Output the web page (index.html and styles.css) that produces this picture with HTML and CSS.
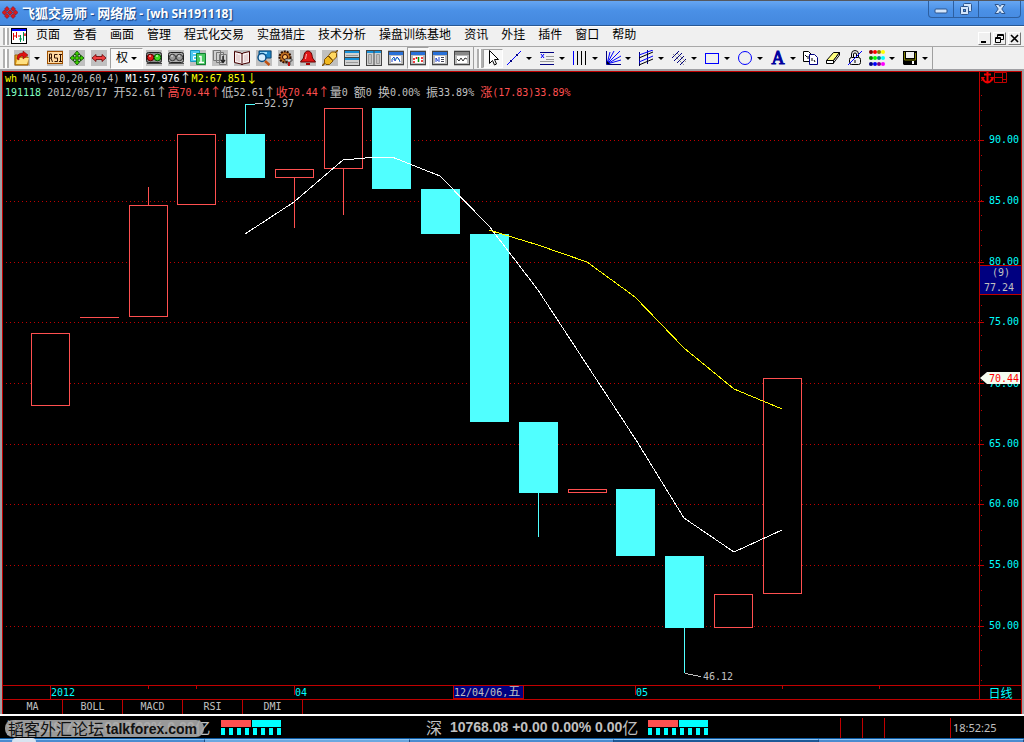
FILE: index.html
```html
<!DOCTYPE html>
<html lang="zh-CN">
<head>
<meta charset="utf-8">
<title>飞狐交易师 - 网络版 - [wh SH191118]</title>
<link rel="stylesheet" href="styles.css">
</head>
<body>
<header class="titlebar">
  <svg class="logo" width="16" height="16" viewBox="0 0 16 16" fill="#e01818" stroke="#7c1020" stroke-width=".6"><path d="M5 1.500l2.500 2.500L5 6.500 2.500 4zM11 1.500L13.500 4 11 6.500 8.500 4zM2.500 5l2.500 2.500L2.500 10 0 7.500zM8 5l2.500 2.500L8 10 5.500 7.500zM13.500 5L16 7.500 13.500 10 11 7.500zM5 8.500L7.500 11 5 13.500 2.500 11zM11 8.500l2.500 2.500-2.500 2.500L8.500 11z"/></svg>
  <h1 class="title"><span class="cn">飞狐交易师</span> - <span class="cn">网络版</span> - [wh SH191118]</h1>
  <div class="winbtns">
    <button class="winbtn" aria-label="最小化"><svg width="14" height="14" viewBox="0 0 14 14"><rect x="1" y="7" width="12" height="4" rx="1" fill="#d4e6fb" stroke="#2d558c"/></svg></button>
    <button class="winbtn" aria-label="还原"><svg width="14" height="14" viewBox="0 0 14 14" fill="#d4e6fb" stroke="#2d558c"><rect x="4.500" y="1.500" width="8" height="8" rx="1"/><rect x="1.500" y="4.500" width="8" height="8" rx="1"/><rect x="4.500" y="7.500" width="2" height="2" fill="#4d91e8"/></svg></button>
    <button class="winbtn wide" aria-label="关闭"><svg width="14" height="14" viewBox="0 0 14 14"><path d="M2 2.500h3.500L7 4.500l1.500-2H12L8.800 7l3.200 4.500H8.500L7 9.500l-1.500 2H2L5.200 7z" fill="#d4e6fb" stroke="#2d558c"/></svg></button>
  </div>
</header>

<nav class="menubar">
  <span class="grip"></span>
  <svg class="docicon" width="16" height="16" viewBox="0 0 16 16"><rect x=".5" y=".5" width="15" height="15" fill="#fff" stroke="#000"/><path d="M1 1h14v2H1z" fill="#00f"/><path d="M2.500 5v7M5.500 4v6M2.500 8h3M14 5v3M12 7h3M7 8h2" stroke="#e00000" fill="none"/><path d="M9.500 7v7M12.500 4v9M8 11h3" stroke="#009050" fill="none"/></svg>
  <a href="#">页面</a><a href="#">查看</a><a href="#">画面</a><a href="#">管理</a><a href="#">程式化交易</a><a href="#">实盘猎庄</a><a href="#">技术分析</a><a href="#">操盘训练基地</a><a href="#">资讯</a><a href="#">外挂</a><a href="#">插件</a><a href="#">窗口</a><a href="#">帮助</a>
  <div class="mdi">
    <button aria-label="最小化窗口"><svg width="9" height="9" viewBox="0 0 9 9"><path d="M1 7h5v2H1z"/></svg></button>
    <button aria-label="还原窗口"><svg width="9" height="9" viewBox="0 0 9 9" fill="none" stroke="#000"><path d="M2.500 3V.5h6v5H6M2 1.500h7M.5 3.500h5v5h-5zM0 4.500h6"/></svg></button>
    <button aria-label="关闭窗口"><svg width="9" height="9" viewBox="0 0 9 9"><path d="M1 1l7 7M8 1L1 8" stroke="#000" stroke-width="1.600"/></svg></button>
  </div>
</nav>

<div class="toolbars">
  <div class="toolbar">
    <span class="grip"></span>
    <button class="tool" aria-label="打开"><svg class="pic" viewBox="0 0 16 16"><path d="M1 5h4l1 2h8v8H1z" fill="#e8a820" stroke="#a06000"/><path d="M2 14l2-6h11l-2 6z" fill="#ffe080"/><path d="M3 9c0-5 3-6 6-6V1l5 4-5 4V6C6 6 5 7 5 10z" fill="#e01010" stroke="#700" stroke-width=".5"/></svg></button>
    <button class="caret" aria-label="打开选项"></button>
    <button class="tool" aria-label="RSI"><svg class="pic" viewBox="0 0 16 16"><rect x=".5" y="1.500" width="15" height="12" fill="#ffd9a0" stroke="#a05000"/><path d="M2.500 12V4h2v4h-2M4 8l1.500 4M10.500 4.500h-3V8h3v3.500h-3M12 4.500h3M13.500 4v8M12 11.500h3" fill="none" stroke="#301000"/></svg></button>
    <button class="tool" aria-label="移动"><svg class="pic" viewBox="0 0 16 16"><path d="M8 1l3 3.500H9V7h2.500V5L15 8l-3.500 3V9H9v2.500h2L8 15l-3-3.500h2V9H4.500v2L1 8l3.500-3v2H7V4.500H5z" fill="#40d000" stroke="#084000" stroke-width=".8"/></svg></button>
    <button class="tool" aria-label="左右平移"><svg class="pic" viewBox="0 0 16 16"><path d="M1 8l4-3.500v2h6v-2L15 8l-4 3.500v-2H5v2z" fill="#f04040" stroke="#600" stroke-width=".8"/></svg></button>
    <button class="quan">权<i class="tri"></i></button>
    <button class="tool" aria-label="红绿灯"><svg class="pic" viewBox="0 0 16 16"><path d="M1 13h15v1H1z" fill="#444"/><rect x=".5" y="2.500" width="15" height="10" rx="2" fill="#888" stroke="#222"/><circle cx="4.500" cy="7.500" r="3.300" fill="#e01818" stroke="#500"/><circle cx="11.500" cy="7.500" r="3.300" fill="#40d820" stroke="#050"/><path d="M3 6h2M10 6h2" stroke="#fff"/></svg></button>
    <button class="tool" aria-label="灰灯"><svg class="pic" viewBox="0 0 16 16"><path d="M1 13h15v1H1z" fill="#555"/><rect x=".5" y="2.500" width="15" height="10" rx="2" fill="#aaa" stroke="#222"/><circle cx="4.500" cy="7.500" r="3.200" fill="#999" stroke="#333"/><circle cx="11.500" cy="7.500" r="3.200" fill="#999" stroke="#333"/><path d="M3 6h2M10 6h2" stroke="#eee"/></svg></button>
    <button class="tool" aria-label="页码"><svg class="pic" viewBox="0 0 16 16"><path d="M.5.5h9v11h-9z" fill="#50c8f0" stroke="#1898c0"/><path d="M3 3.500h4v3H3.500v3H7" fill="none" stroke="#fff"/><path d="M6.500 3.500h9v11h-9z" fill="#48c860" stroke="#108030"/><path d="M9 6.500h2V12M9 12.500h5" stroke="#fff" stroke-width="1.500" fill="none"/></svg></button>
    <button class="tool" aria-label="下一页"><svg class="pic" viewBox="0 0 16 16" fill="#d0d0d0" stroke="#777"><path d="M1.500.5h7v10h-7zM4.500 2.500h7v10h-7zM7.500 4.500h7v10h-7z"/><path d="M11 6v6M9 10l2 2.500 2-2.500" fill="none" stroke="#222" stroke-width="1.400"/></svg></button>
    <button class="tool" aria-label="资料"><svg class="pic" viewBox="0 0 16 16"><path d="M.5 1.500L7 3l1 1 1-1 6.500-1.500v11L9 14l-1 1-1-1-6.500-1.500z" fill="#f8f0f0" stroke="#400"/><path d="M8 4v11" stroke="#400"/><path d="M3 4v7M5 5v7M11 5v7M13 4v7" stroke="#d8b8b8"/></svg></button>
    <button class="tool" aria-label="查找"><svg class="pic" viewBox="0 0 16 16"><path d="M3 1h12v7H3z" fill="#2088c8" stroke="#084878"/><path d="M4 2h7v2H4z" fill="#a0e0ff"/><circle cx="6" cy="7.500" r="4" fill="#d8f0ff" stroke="#085088" stroke-width="1.500"/><path d="M9 11l4.500 4" stroke="#c05010" stroke-width="2.500"/></svg></button>
    <button class="tool" aria-label="设置"><svg class="pic" viewBox="0 0 16 16"><circle cx="7" cy="7" r="5.500" fill="#c07020" stroke="#301000" stroke-width="2" stroke-dasharray="2 1"/><circle cx="7" cy="7" r="2.500" fill="#ffc060" stroke="#300"/><path d="M7 9h7v2h-2v4h-2v-4H7z" fill="#ddd" stroke="#222" stroke-width=".7"/><path d="M11 12v4" stroke="#c01010" stroke-width="2"/></svg></button>
    <button class="tool" aria-label="预警"><svg class="pic" viewBox="0 0 16 16"><path d="M8 1c3 0 4 3 4.500 7l3 4H.5l3-4C4 4 5 1 8 1z" fill="#e01818" stroke="#600"/><path d="M6 13h4v2H6z" fill="#a00"/><path d="M6.500 4L5.500 9" stroke="#ffb0b0"/></svg></button>
    <button class="tool" aria-label="连接"><svg class="pic" viewBox="0 0 16 16"><path d="M0 16l4-4M12 4l4-4" stroke="#805000" stroke-width="1.500"/><path d="M2.500 9.500L6 6l5 5-3.500 3.500H4L2.500 13z" fill="#f0b820" stroke="#805000"/><path d="M6.500 5.500l3-3.500H13l1.500 1.500V7l-3.500 3.500z" fill="#ffd860" stroke="#805000"/></svg></button>
    <button class="tool" aria-label="横向平铺"><svg class="pic" viewBox="0 0 16 16"><rect x=".5" y=".5" width="15" height="15" fill="#d0d0d0" stroke="#444"/><path d="M1 1h14v2H1zM1 8h14v2H1z" fill="#1890d8"/><path d="M1 7.500h14" stroke="#444"/><path d="M2 5.500h12M2 12.500h12" stroke="#999"/></svg></button>
    <button class="tool" aria-label="纵向平铺"><svg class="pic" viewBox="0 0 16 16"><rect x=".5" y=".5" width="15" height="15" fill="#d0d0d0" stroke="#444"/><path d="M1 1h14v2H1z" fill="#1890d8"/><path d="M8 1v14" stroke="#444"/><path d="M2.500 4.500h3v9h-3zM10.500 4.500h3v9h-3z" fill="#c0c0c0" stroke="#999"/></svg></button>
    <button class="tool" aria-label="分时图"><svg class="pic" viewBox="0 0 16 16"><rect x=".5" y="1.500" width="15" height="13" fill="#bbb" stroke="#444"/><path d="M1 2h14v3H1z" fill="#2870d8"/><path d="M3 6h10v7H3z" fill="#fff"/><path d="M4 12V9l2-2 1 4 2-4 2 2 1 3" fill="none" stroke="#24c"/><path d="M4 8l2 2 3-2 3 3" fill="none" stroke="#0aa" stroke-dasharray="1 1"/></svg></button>
    <button class="tool pressed" aria-label="K线图"><svg class="pic" viewBox="0 0 16 16"><rect x=".5" y="1.500" width="15" height="13" fill="#bbb" stroke="#444"/><path d="M1 2h14v3H1z" fill="#2870d8"/><path d="M3 6h10v7H3z" fill="#fff"/><path d="M4 8v5M12 7v6M6.500 7v2" stroke="#e00" stroke-width="1.500" stroke-dasharray="2 1"/><path d="M8.500 7v5" stroke="#090" stroke-width="1.500"/></svg></button>
    <button class="tool" aria-label="报价"><svg class="pic" viewBox="0 0 16 16"><rect x=".5" y="1.500" width="15" height="13" fill="#bbb" stroke="#444"/><path d="M1 2h14v3H1z" fill="#2870d8"/><path d="M3 6h10v7H3z" fill="#fff"/><path d="M4 12V8l2 3M7 7v5" fill="none" stroke="#24c"/><path d="M9 7.500h3M9 9.500h3M9 11.500h3" stroke="#445"/></svg></button>
    <button class="tool" aria-label="走势"><svg class="pic" viewBox="0 0 16 16"><rect x=".5" y="1.500" width="15" height="13" fill="#bbb" stroke="#444"/><path d="M1 2h14v3H1z" fill="#888"/><path d="M3 6h10v7H3z" fill="#fff"/><path d="M3 9l2 2 2-3 2 3 2-3 2 1" fill="none" stroke="#333"/></svg></button>
  </div>
  <div class="toolbar draw">
    <span class="grip"></span>
    <button class="tool pointer" aria-label="选择"><svg viewBox="0 0 16 16"><path d="M4.500.5v13l3-3 2 4.500 2-1-2-4.500h4z" fill="#fff" stroke="#000"/></svg></button>
    <button class="tool" aria-label="直线"><svg viewBox="0 0 16 16"><path d="M1 15L15 1" stroke="#00f"/><path d="M4 10h2v2H4zM10 4h2v2h-2z" fill="#000080"/></svg></button><button class="caret" aria-label="直线选项"></button>
    <button class="tool" aria-label="水平线"><svg viewBox="0 0 16 16"><path d="M1 2.500h14M1 14.500h14" stroke="#000080"/><path d="M7 6.500h8M7 9.500h8M1 11.500h14" stroke="#999"/><path d="M2 4l3 4M5 4L2 8" stroke="#00f"/></svg></button><button class="caret" aria-label="水平线选项"></button>
    <button class="tool" aria-label="垂直线"><svg viewBox="0 0 16 16"><path d="M1.500 1v14" stroke="#00f"/><path d="M5.500 1v14M9.500 1v14M13.500 1v14" stroke="#000"/></svg></button><button class="caret" aria-label="垂直线选项"></button>
    <button class="tool" aria-label="扇形线"><svg viewBox="0 0 16 16" fill="none"><path d="M1.500 1v13.500H16" stroke="#000080"/><path d="M2 14L5 2M2 14L9 1M2 14L15 1M2 14L16 6M2 14L16 10" stroke="#00f"/><path d="M2 11l3 3H2z" fill="#000"/></svg></button><button class="caret" aria-label="扇形线选项"></button>
    <button class="tool" aria-label="通道线"><svg viewBox="0 0 16 16"><path d="M1.500 2v14M9.500 0v14" stroke="#000080"/><path d="M1 8l14-6M1 15l14-6" stroke="#000"/><path d="M1 5l14-5M1 12l14-6" stroke="#00f"/></svg></button><button class="caret" aria-label="通道线选项"></button>
    <button class="tool" aria-label="平行线"><svg viewBox="0 0 16 16" stroke="#000080"><path d="M1 8l7-7M3 11l8-8M6 13l7-7M9 15l6-6"/><path d="M2 4l11 11M6 3l9 9" stroke="#555" stroke-dasharray="1 1"/></svg></button><button class="caret" aria-label="平行线选项"></button>
    <button class="tool" aria-label="矩形"><svg viewBox="0 0 16 16"><rect x="1.500" y="3.500" width="13" height="10" fill="none" stroke="#00f"/></svg></button><button class="caret" aria-label="矩形选项"></button>
    <button class="tool" aria-label="圆形"><svg viewBox="0 0 16 16"><circle cx="8" cy="8" r="6.500" fill="none" stroke="#00f"/></svg></button><button class="caret" aria-label="圆形选项"></button>
    <button class="tool letter">A</button><button class="caret" aria-label="文字选项"></button>
    <button class="tool" aria-label="复制"><svg viewBox="0 0 16 16" fill="#fff" stroke="#000"><path d="M.5 1.500h5l3 3v7h-8z"/><path d="M6.500 4.500h5l3 3v7h-8z" stroke="#000080"/><path d="M2 5l2 2M5 6v3M9 8v3M11 10l1 2"/></svg></button>
    <button class="tool" aria-label="橡皮"><svg viewBox="0 0 16 16" stroke="#000"><path d="M1.500 10.500l7-8h6l-6 8z" fill="#ffff80"/><path d="M1.500 10.500h7v3h-7zM8.500 10.500l6-8V5l-6 8z" fill="#fff"/></svg></button>
    <button class="tool" aria-label="锁定"><svg viewBox="0 0 16 16" fill="none" stroke="#000"><rect x="2.500" y="7.500" width="11" height="7" rx="2"/><path d="M4.500 7V4q0-3.500 3.500-3.500T11.500 4v3M6.500 7V4q0-1 1.500-1t1.500 1v3M8 10v3"/><path d="M1 15L15 1" stroke="#00f"/></svg></button>
    <button class="tool" aria-label="颜色"><svg viewBox="0 0 16 16"><circle cx="2" cy="2" r="2" fill="#800000"/><circle cx="6" cy="2" r="2" fill="#f00"/><circle cx="10" cy="2" r="2" fill="#808000"/><circle cx="14" cy="2" r="2" fill="#ff0"/><circle cx="2" cy="8" r="2" fill="#008000"/><circle cx="6" cy="8" r="2" fill="#0f0"/><circle cx="10" cy="8" r="2" fill="#008080"/><circle cx="14" cy="8" r="2" fill="#0ff"/><circle cx="2" cy="14" r="2" fill="#000080"/><circle cx="6" cy="14" r="2" fill="#00f"/><circle cx="10" cy="14" r="2" fill="#800080"/><circle cx="14" cy="14" r="2" fill="#f0f"/></svg></button><button class="caret" aria-label="颜色选项"></button>
    <button class="tool" aria-label="保存"><svg viewBox="0 0 16 16"><path d="M1 1h14v14H2l-1-1z" fill="#000"/><path d="M4 2h8v6H4z" fill="#f0f0f0"/><path d="M2.500 2v8h11V3" stroke="#808000" fill="none"/><path d="M10 11h2v3h-2z" fill="#fff"/></svg></button><button class="caret" aria-label="保存选项"></button>
  </div>
</div>

<main class="frame">
  <section class="plot">
    <div class="readout">
      <p><b class="yel">wh</b> MA(5,10,20,60,4) <b class="wht">M1:57.976<span class="z">↑</span></b><b class="yel">M2:67.851<span class="z">↓</span></b></p>
      <p><span class="grn">191118</span> 2012/05/17 <span class="z">开</span>52.61<span class="z">↑</span><span class="red"><span class="z">高</span>70.44<span class="z">↑</span></span><span class="z">低</span>52.61<span class="z">↑</span><span class="red"><span class="z">收</span>70.44<span class="z">↑</span></span><span class="z">量</span>0 <span class="z">额</span>0 <span class="z">换</span>0.00% <span class="z">振</span>33.89% <span class="red"><span class="z">涨</span>(17.83)33.89%</span></p>
    </div>
    <svg class="chart" viewBox="3 72 976 613" preserveAspectRatio="none">
      <path class="grid" d="M6 140.500H979M6 201.500H979M6 262.500H979M6 322.500H979M6 383.500H979M6 444.500H979M6 504.500H979M6 565.500H979M6 626.500H979"/>
      <g class="up">
        <rect x="31.500" y="333.500" width="38" height="72"/>
        <path d="M80 317.500H119"/>
        <rect x="129.500" y="205.500" width="38" height="111"/><path d="M148.500 187V205"/>
        <rect x="177.500" y="134.500" width="38" height="70"/>
        <rect x="275.500" y="169.500" width="38" height="8"/><path d="M294.500 178V228"/>
        <rect x="324.500" y="108.500" width="38" height="60"/><path d="M343.500 169V215"/>
        <rect x="568.500" y="489.500" width="38" height="3"/>
        <rect x="714.500" y="594.500" width="38" height="33"/>
        <rect x="763.500" y="378.500" width="38" height="215"/>
      </g>
      <g class="down">
        <rect x="226" y="134" width="39" height="44"/><rect x="245" y="104" width="1" height="30"/><rect x="245" y="104" width="10" height="1"/>
        <rect x="372" y="108" width="39" height="81"/>
        <rect x="421" y="189" width="39" height="45"/>
        <rect x="470" y="234" width="39" height="188"/>
        <rect x="519" y="422" width="39" height="71"/><rect x="538" y="493" width="1" height="44"/>
        <rect x="616" y="489" width="39" height="67"/>
        <rect x="665" y="556" width="39" height="72"/><rect x="684" y="628" width="1" height="45"/>
      </g>
      <path class="leader" d="M255 103.500H263M685 673.500L701 676.500"/>
      <polyline class="ma1" points="245,234 294,202 343,160 365,158 392,157 440,176 489,226 538,290 587,365 636,440 684,518 734,552 782,530"/>
      <polyline class="ma2" points="489,230 538,245 587,262 635,297 684,348 734,389 782,409"/>
      <text class="note" x="264" y="107">92.97</text>
      <text class="note" x="703" y="680">46.12</text>
    </svg>
  </section>
  <aside class="axis">
    <svg viewBox="980 72 41 613" preserveAspectRatio="none">
      <path class="edge" d="M980 140.500h4M980 201.500h4M980 262.500h4M980 322.500h4M980 383.500h4M980 444.500h4M980 504.500h4M980 565.500h4M980 626.500h4"/>
      <path class="minor" d="M981.500 80V681"/>
      <g class="price"><text x="989" y="143">90.00</text><text x="989" y="204">85.00</text><text x="989" y="265">80.00</text><text x="989" y="325">75.00</text><text x="989" y="387">70.00</text><text x="989" y="447">65.00</text><text x="989" y="507">60.00</text><text x="989" y="568">55.00</text><text x="989" y="629">50.00</text></g>
      <rect class="cursor" x="979.500" y="265.500" width="42" height="29"/>
      <text class="note" x="992" y="276">(9)</text><text class="note" x="984" y="291">77.24</text>
      <path d="M980 378l7-6h33v12h-33z" fill="#f4fcf0"/>
      <text class="last" x="989" y="382">70.44</text>
      <path d="M987.500 72v10M984 74.500h7M983 79q1 3 4.500 3.500Q991 82 992 79" fill="none" stroke="#f00000" stroke-width="2"/><path d="M981 77h4l-3 4zM994 77h-4l3 4z" fill="#f00000"/>
      <path d="M994.500 72.500h12v10h-12zM1002.500 72.500v10M994.500 77.500h8M1002 79.500h4" fill="none" stroke="#c00000"/>
    </svg>
  </aside>
  <div class="dates">
    <svg viewBox="3 686 976 13" preserveAspectRatio="none">
      <path class="edge" d="M50.500 686v13M148.500 686v3M196.500 686v3M294.500 686v9M635.500 686v9M782.500 686v3M879.500 686v3"/>
      <g class="price"><text x="51" y="696">2012</text><text x="295" y="696">04</text><text x="636" y="696">05</text></g>
      <rect class="cursor" x="453.500" y="685.500" width="70" height="13"/>
      <text class="note" x="454" y="696">12/04/06,<tspan class="zt">五</tspan></text>
    </svg>
  </div>
  <button class="period">日线</button>
  <div class="tabs"><button>MA</button><button>BOLL</button><button>MACD</button><button>RSI</button><button>DMI</button></div>
</main>

<footer class="status">
  <div class="index"><span class="zi">沪</span> 2020.78 +0.00 0.00% 0.00<span class="zi">亿</span><span class="meter"></span><span class="mark"><span class="kai">韬客外汇论坛</span>talkforex.com</span></div>
  <div class="index"><span class="zi">深</span> 10768.08 +0.00 0.00% 0.00<span class="zi">亿</span><span class="meter"></span></div>
  <span class="cell"></span><span class="cell"></span><span class="cell grow"></span>
  <time class="cell clock">18:52:25</time>
</footer>
<div class="taskbar"><i class="orb"></i><i class="task"></i><i class="task light"></i><i class="task"></i><i class="task dark"></i><i class="task"></i></div>
</body>
</html>
```

FILE: styles.css
```css
* { box-sizing: border-box; }
body {
  margin: 0;
  min-height: 100vh;
  display: flex;
  flex-direction: column;
  background: #000;
  font: 12px/16px "Liberation Sans", "Noto Sans CJK SC", sans-serif;
  overflow: hidden;
}
button { margin: 0; padding: 0; border: 0; background: none; font: inherit; color: inherit; }
svg { display: block; flex: none; }

.titlebar {
  height: 26px;
  display: flex;
  align-items: center;
  padding: 0 3px 0 2px;
  background: linear-gradient(#66a6f2, #4a90e6 40%, #4488de);
  border-top: 1px solid #55585f;
  border-bottom: 1px solid #285894;
}
.title {
  flex: 1;
  margin: 0 0 0 4px;
  color: #fff;
  font: bold 12px/24px "Open Sans", "Noto Sans CJK SC", sans-serif;
  text-shadow: 1px 1px 1px #123c7c;
}
.title .cn { font-size: 13px; }
.winbtns { display: flex; align-self: flex-start; border: 1px solid #2d5fa0; border-top: 0; border-radius: 0 0 4px 4px; }
.winbtn { width: 25px; height: 16px; display: grid; place-items: center; border-right: 1px solid #2d5fa0; }
.winbtn.wide { width: 41px; border-right: 0; }

.menubar {
  height: 21px;
  display: flex;
  align-items: center;
  gap: 13px;
  padding: 0 3px 1px;
  background: #f0f0f0;
  border-top: 1px solid #fff;
  border-bottom: 1px solid #a8a8a8;
  color: #000;
  white-space: nowrap;
}
.menubar a { color: inherit; text-decoration: none; line-height: 14px; padding-bottom: 2px; }
.grip {
  flex: none;
  width: 6px;
  height: 17px;
  border: solid #b0b0b0;
  border-width: 0 2px;
  background: #fff;
}
.docicon { margin: 0 -4px 0 -11px; }
.mdi { margin-left: auto; display: flex; gap: 2px; align-self: flex-end; }
.mdi button { width: 13px; height: 13px; display: grid; place-items: center; border: 1px solid #fff; border-color: #fff #777 #777 #fff; }

.toolbars { height: 24px; display: flex; background: #f0f0f0; border-bottom: 2px solid #a0a0a4; }
.toolbar { display: flex; align-items: center; padding-left: 3px; border-right: 1px solid #a0a0a0; }
.toolbar .grip { height: 19px; margin-right: 2px; }
.draw .grip { margin-right: 0; }
.tool { width: 22px; height: 22px; flex: none; display: grid; place-items: center; }
.tool svg { width: 16px; height: 16px; }
.tool .pic { background: #c0c0c0; }
.pressed, .pointer { background: #f8f8f8; border: 1px solid #a0a0a0; border-color: #a0a0a0 #fff #fff #a0a0a0; }
.pointer { width: 20px; height: 19px; }
.letter { color: #0000a0; font: 18px/20px "Liberation Serif", serif; -webkit-text-stroke: 1px #0000a0; }
.caret { width: 11px; height: 22px; flex: none; display: flex; align-items: center; padding-left: 1px; }
.caret::before, .tri { content: ""; border: solid transparent; border-width: 3px 3px 0; border-top-color: #000; }
.quan {
  width: 33px;
  height: 21px;
  display: flex;
  align-items: center;
  justify-content: center;
  gap: 3px;
  background: #f8f8f8;
  border: 1px solid #a0a0a0;
  border-color: #a0a0a0 #fff #fff #a0a0a0;
}

.frame {
  flex: 1;
  display: grid;
  grid-template: 1fr 14px 15px / 1fr 41px;
  column-gap: 1px;
  background: #000;
  border: solid #c00000;
  border-width: 1px 1px 0 1px;
  margin: 0 2px;
  outline: 2px solid #a0a0a4;
  color: #c0c0c0;
  font: 10px/14px "DejaVu Sans Mono", "Noto Sans CJK SC", monospace;
}
.plot { position: relative; min-height: 0; box-shadow: 1px 0 #c00000; }
.readout { position: absolute; left: 2px; top: 0; }
.readout p { margin: 0; line-height: 14px; height: 14px; white-space: pre; }
.readout b { font-weight: normal; }
.z { display: inline-block; width: 12px; height: 14px; font: 12px/12px "Noto Sans CJK SC", sans-serif; text-align: center; vertical-align: top; }
.wht { color: #fff; }
.yel { color: #ff0; }
.grn { color: #80ffc0; }
.red { color: #ff5050; }
.chart, .axis svg, .dates svg { width: 100%; height: 100%; }
.chart path, .chart polyline, .chart rect { shape-rendering: crispEdges; }
.axis { min-height: 0; }
.grid { stroke: #c00000; stroke-dasharray: 1 3; }
.up { fill: #000; stroke: #ff5050; }
.down { fill: #50ffff; }
.leader { stroke: #c0c0c0; fill: none; }
.ma1 { fill: none; stroke: #fff; }
.ma2 { fill: none; stroke: #ff0; }
.note { fill: #c0c0c0; }
.price { fill: #0ff; }
.last { fill: #f00; }
.zt { font-size: 12px; }
.edge { stroke: #c00000; }
.minor { stroke: #c00000; stroke-dasharray: 1 14; }
.cursor { fill: #000080; stroke: #c00000; }
.dates { border-top: 1px solid #c00000; box-shadow: 1px 0 #c00000; }
.period { border-top: 1px solid #c00000; color: #0ff; font: 12px/13px "Noto Sans CJK SC", sans-serif; }
.tabs { grid-column: 1 / -1; display: flex; border-top: 1px solid #c00000; }
.tabs button { width: 60px; border-right: 1px solid #c00000; }

.status {
  height: 24px;
  display: flex;
  padding-right: 2px;
  background: #000;
  border-top: 2px solid #fff;
  color: #c0c0c0;
  white-space: nowrap;
}
.index { flex: 1; position: relative; display: flex; align-items: center; padding-left: 6px; font: bold 14px/20px "Liberation Sans", sans-serif; white-space: pre; }
.zi { font: 16px/20px "Noto Sans CJK SC", sans-serif; margin-right: 4px; }
.meter {
  width: 60px;
  height: 15px;
  margin-left: 6px;
  background:
    linear-gradient(90deg, #ff5050 30px, #000 30px, #000 31px, #0ff 31px) 0 0 / 100% 7px no-repeat,
    repeating-linear-gradient(90deg, #0ff 0 4px, #000 4px 8px) 0 8px / 100% 7px no-repeat;
}
.mark {
  position: absolute;
  left: 5px;
  top: 4px;
  height: 17px;
  display: flex;
  align-items: center;
  gap: 2px;
  padding: 0 7px 0 3px;
  border-radius: 8px;
  background: rgba(170, 170, 170, .9);
  color: #111;
}
.kai { font: 16px/17px "Noto Sans CJK SC", sans-serif; }
.cell { width: 22px; margin-top: 2px; border-left: 1px solid #c00000; }
.grow { width: 66px; }
.clock { width: 72px; padding-left: 2px; font: 11px/20px "Noto Sans", sans-serif; }

.taskbar { height: 4px; display: flex; background: #3c78b8; border-top: 1px solid #0a58a0; position: relative; }
.task { flex: 1; border-top: 1px solid #8cc4f4; border-right: 1px solid #1c4c84; background: #4a8cd0; }
.light { background: #6aa8e0; }
.dark { background: #1c5a98; }
.orb { position: absolute; left: 12px; top: -1px; width: 24px; height: 4px; border-radius: 12px 12px 0 0; background: #d8e4f0; }
```
